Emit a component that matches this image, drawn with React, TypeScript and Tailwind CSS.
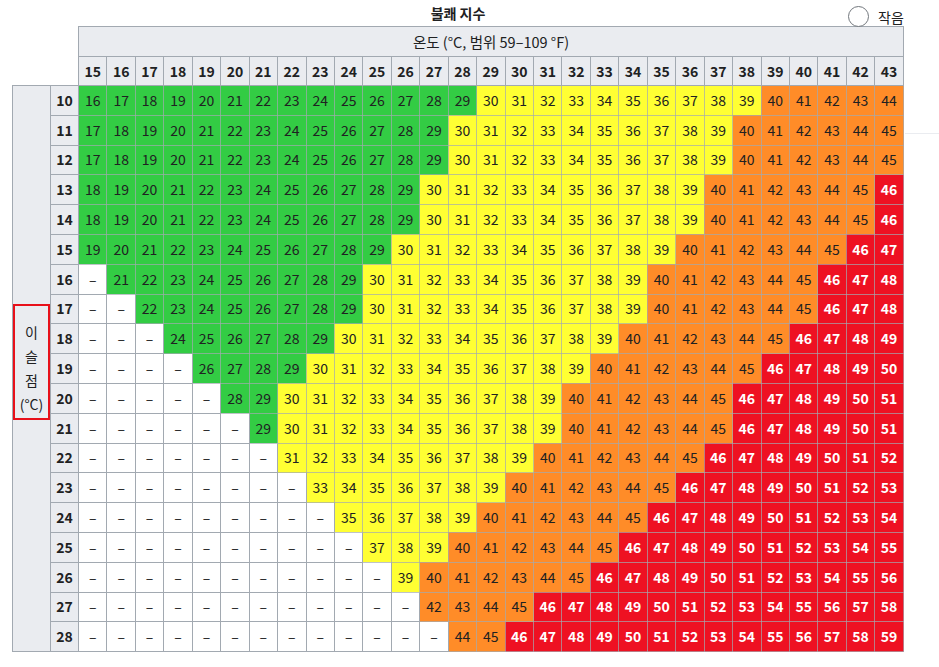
// 불쾌 지수 표: 온도 × 이슬점
const TEMPS = Array.from({ length: 29 }, (_, i) => 15 + i)

// [이슬점, 앞쪽 빈칸 수, 첫 값]
const ROWS: Array<[number, number, number]> = [
  [10, 0, 16], [11, 0, 17], [12, 0, 17], [13, 0, 18], [14, 0, 18],
  [15, 0, 19], [16, 1, 21], [17, 2, 22], [18, 3, 24], [19, 4, 26],
  [20, 5, 28], [21, 6, 29], [22, 7, 31], [23, 8, 33], [24, 9, 35],
  [25, 10, 37], [26, 11, 39], [27, 12, 42], [28, 13, 44]
]

function cellClass(v: number) {
  if (v <= 29) return 'bg-[#33cc44] text-[#202122]'
  if (v <= 39) return 'bg-[#ffff33] text-[#202122]'
  if (v <= 45) return 'bg-[#ff8c28] text-[#202122]'
  return 'bg-[#ee1122] text-white font-bold'
}

export default function App() {
  return (
    <div
      className="relative w-[939px] h-[667px] bg-white text-[#202122] overflow-hidden"
      style={{ fontFamily: '"Noto Sans CJK KR", "Noto Sans", sans-serif' }}
    >
      {/* 크기 토글 */}
      <div className="absolute top-[6px] left-[848px] flex items-center gap-[9px]">
        <span className="w-[21px] h-[21px] rounded-full border border-[#72777d] bg-white" />
        <span className="text-[14px] leading-5">작음</span>
      </div>
      <div className="absolute top-[133px] left-[905px] w-[34px] h-px bg-[#eaecf0]" />

      <div className="pl-[12px]">
        <table className="table-fixed border-collapse w-[892px] text-[14px]">
          <caption className="h-[26px] font-bold text-[14px] leading-[26px] text-center">불쾌 지수</caption>
          <colgroup>
            <col className="w-[38px]" />
            <col className="w-[28px]" />
            {TEMPS.map((t) => (
              <col key={t} />
            ))}
          </colgroup>
          <thead>
            <tr className="h-[30px]">
              <th colSpan={2} className="border-0" />
              <th colSpan={29} className="border border-[#a2a9b1] bg-[#eaecf0] font-normal text-center text-[14.5px]">
                온도 (°C, 범위 59–109 °F)
              </th>
            </tr>
            <tr className="h-[29px]">
              <th colSpan={2} className="border-0" />
              {TEMPS.map((t) => (
                <th key={t} className="border border-[#a2a9b1] bg-[#eaecf0] font-bold text-center p-0">
                  {t}
                </th>
              ))}
            </tr>
          </thead>
          <tbody>
            {ROWS.map(([dew, blanks, start], ri) => (
              <tr key={dew} className="h-[29.8px]">
                {ri === 0 && (
                  <th rowSpan={19} className="border border-[#a2a9b1] bg-[#eaecf0] p-0 align-middle font-normal">
                    <div className="border-[2.5px] border-[#e8101a] pt-[14px] pb-[2px] flex flex-col items-center leading-6 -mt-[14px]">
                      <span>이</span>
                      <span>슬</span>
                      <span>점</span>
                      <span>(°C)</span>
                    </div>
                  </th>
                )}
                <th className="border border-[#a2a9b1] bg-[#eaecf0] font-bold text-center p-0">{dew}</th>
                {TEMPS.map((t, ci) => {
                  if (ci < blanks)
                    return (
                      <td key={t} className="border border-[#a2a9b1] bg-white text-center p-0">
                        –
                      </td>
                    )
                  const v = start + (ci - blanks)
                  return (
                    <td key={t} className={`border border-[#a2a9b1]/70 text-center p-0 ${cellClass(v)}`}>
                      {v}
                    </td>
                  )
                })}
              </tr>
            ))}
          </tbody>
        </table>
      </div>
    </div>
  )
}
